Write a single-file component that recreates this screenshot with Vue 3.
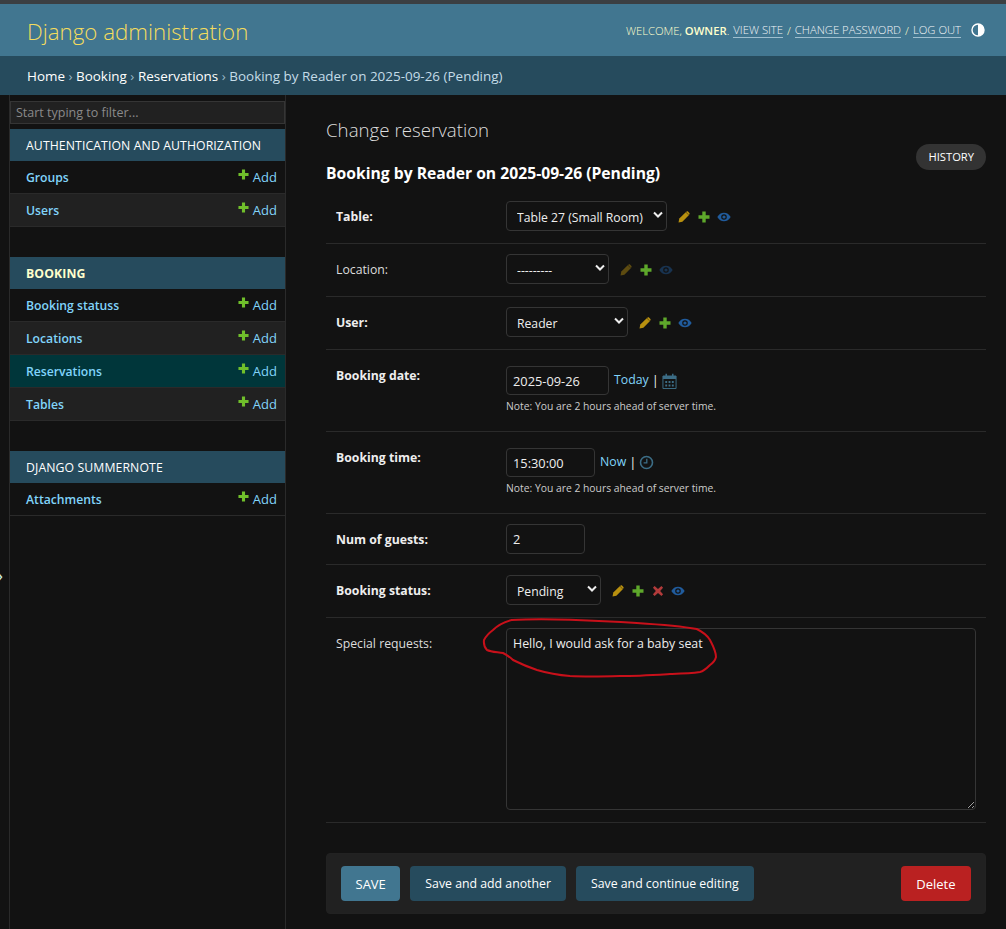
<template>
  <div class="page">
    <svg class="defs" width="0" height="0">
      <symbol id="i-plus" viewBox="0 0 12 12"><path d="M4.3 0.5h3.4v3.8h3.8v3.4h-3.8v3.8h-3.4v-3.8h-3.8v-3.4h3.8z" fill="currentColor" /></symbol>
      <symbol id="i-pencil" viewBox="0 0 12 12">
        <path d="M0.5 11.5l0.8-3.9 6.4-6.4 3.1 3.1-6.4 6.4z" fill="currentColor" />
        <path d="M8.6 0.7c0.5-0.5 1-0.5 1.4-0.1l1.4 1.4c0.4 0.4 0.4 0.9-0.1 1.4l-0.5 0.5-3.1-3.1z" fill="currentColor" />
      </symbol>
      <symbol id="i-cross" viewBox="0 0 12 12"><path d="M2.6 1l3.4 3 3.4-3 1.7 1.7-3 3.3 3 3.3-1.7 1.7-3.4-3-3.4 3-1.7-1.7 3-3.3-3-3.3z" fill="currentColor" /></symbol>
      <symbol id="i-eye" viewBox="0 0 14 10">
        <path fill-rule="evenodd" d="M0.3 5c1.6-2.8 3.9-4.3 6.7-4.3s5.1 1.5 6.7 4.3c-1.6 2.8-3.9 4.3-6.7 4.3s-5.1-1.5-6.7-4.3zM7 2.2a2.8 2.8 0 1 0 0 5.6a2.8 2.8 0 1 0 0-5.6z" fill="currentColor" />
        <circle cx="7" cy="5" r="1.6" fill="currentColor" />
      </symbol>
    </svg>

    <header class="topbar">
      <div class="brand">Django administration</div>
      <div class="usertools">
        <span>Welcome, <strong>owner</strong>.</span>
        <a>View site</a><span class="slash">/</span><a>Change password</a><span class="slash">/</span><a>Log out</a>
        <svg class="theme" width="14" height="14" viewBox="0 0 14 14">
          <circle cx="7" cy="7" r="6" fill="none" stroke="#fff" stroke-width="1.4" />
          <path d="M7 1a6 6 0 0 1 0 12z" fill="#fff" />
        </svg>
      </div>
    </header>

    <nav class="crumbs">
      <a>Home</a> › <a>Booking</a> › <a>Reservations</a> › <span>Booking by Reader on 2025-09-26 (Pending)</span>
    </nav>

    <div class="body">
      <aside class="sidebar">
        <input class="filter" placeholder="Start typing to filter..." />
        <section v-for="mod in modules" :key="mod.name" class="module">
          <h3 class="caption" :class="{ current: mod.current }">{{ mod.name }}</h3>
          <div
            v-for="item in mod.items"
            :key="item"
            class="item"
            :class="{ selected: item === 'Reservations' }"
          >
            <a class="model">{{ item }}</a>
            <a class="add">
              <svg class="add-icon"><use href="#i-plus" /></svg>
              Add
            </a>
          </div>
        </section>
        <span class="toggle">»</span>
      </aside>

      <main class="content">
        <h1 class="title">Change reservation</h1>
        <div class="subhead">
          <h2>Booking by Reader on 2025-09-26 (Pending)</h2>
          <a class="history">History</a>
        </div>

        <form @submit.prevent>
          <div class="row">
            <label class="strong">Table:</label>
            <div class="select" style="width: 161px">
              <select><option>Table 27 (Small Room)</option></select>
              <svg class="chevron" viewBox="0 0 10 7"><path d="M1 1.5l4 4 4-4" /></svg>
            </div>
            <div class="actions-inline">
              <svg class="ico pencil"><use href="#i-pencil" /></svg>
              <svg class="ico plus"><use href="#i-plus" /></svg>
              <svg class="ico eye"><use href="#i-eye" /></svg>
            </div>
          </div>

          <div class="row">
            <label>Location:</label>
            <div class="select" style="width: 103px">
              <select><option>---------</option></select>
              <svg class="chevron" viewBox="0 0 10 7"><path d="M1 1.5l4 4 4-4" /></svg>
            </div>
            <div class="actions-inline">
              <svg class="ico pencil off"><use href="#i-pencil" /></svg>
              <svg class="ico plus"><use href="#i-plus" /></svg>
              <svg class="ico eye off"><use href="#i-eye" /></svg>
            </div>
          </div>

          <div class="row">
            <label class="strong">User:</label>
            <div class="select" style="width: 122px">
              <select><option>Reader</option></select>
              <svg class="chevron" viewBox="0 0 10 7"><path d="M1 1.5l4 4 4-4" /></svg>
            </div>
            <div class="actions-inline">
              <svg class="ico pencil"><use href="#i-pencil" /></svg>
              <svg class="ico plus"><use href="#i-plus" /></svg>
              <svg class="ico eye"><use href="#i-eye" /></svg>
            </div>
          </div>

          <div class="row tall">
            <label class="strong">Booking date:</label>
            <div>
              <div class="datetime">
                <input class="text" style="width: 103px" value="2025-09-26" />
                <a class="shortcut">Today</a><span class="pipe">|</span>
                <svg class="cal" width="15" height="16" viewBox="0 0 16 16" preserveAspectRatio="none">
                  <path d="M1 3h14v12.5H1z" fill="none" stroke="#447e9b" />
                  <path d="M1 3h14v3H1zM3.5 8h2v2h-2zM7 8h2v2H7zM10.5 8h2v2h-2zM3.5 11.5h2v2h-2zM7 11.5h2v2H7zM10.5 11.5h2v2h-2z" fill="#447e9b" />
                  <path d="M4.5 0.8v3M11.5 0.8v3" stroke="#447e9b" stroke-width="1.6" />
                </svg>
              </div>
              <p class="note">Note: You are 2 hours ahead of server time.</p>
            </div>
          </div>

          <div class="row tall">
            <label class="strong">Booking time:</label>
            <div>
              <div class="datetime">
                <input class="text" style="width: 89px" value="15:30:00" />
                <a class="shortcut">Now</a><span class="pipe">|</span>
                <svg class="clock" width="15" height="15" viewBox="0 0 15 15">
                  <circle cx="7.5" cy="7.5" r="6" fill="none" stroke="#447e9b" stroke-width="1.6" />
                  <path d="M7.8 3.8v4H4.6" fill="none" stroke="#447e9b" stroke-width="1.3" />
                </svg>
              </div>
              <p class="note">Note: You are 2 hours ahead of server time.</p>
            </div>
          </div>

          <div class="row short">
            <label class="strong">Num of guests:</label>
            <input class="text guests" style="width: 79px" value="2" />
          </div>

          <div class="row">
            <label class="strong">Booking status:</label>
            <div class="select" style="width: 95px">
              <select><option>Pending</option></select>
              <svg class="chevron" viewBox="0 0 10 7"><path d="M1 1.5l4 4 4-4" /></svg>
            </div>
            <div class="actions-inline">
              <svg class="ico pencil"><use href="#i-pencil" /></svg>
              <svg class="ico plus"><use href="#i-plus" /></svg>
              <svg class="ico cross"><use href="#i-cross" /></svg>
              <svg class="ico eye"><use href="#i-eye" /></svg>
            </div>
          </div>

          <div class="row">
            <label>Special requests:</label>
            <textarea class="requests" :value="requests"></textarea>
          </div>

          <div class="submit-row">
            <button class="btn primary">SAVE</button>
            <button class="btn">Save and add another</button>
            <button class="btn">Save and continue editing</button>
            <a class="btn danger">Delete</a>
          </div>
        </form>

        <!-- red marker scribble on top of the screenshot -->
        <svg class="scribble" width="260" height="70" viewBox="0 0 260 70">
          <path d="M36.7 5C60 3.5 75 4 95 4.7C120 5.5 140 6.5 161.7 8C185 9.5 205 11 221.7 14C228 17 232 20 235 25C238 31 241 36 241 42C240 46 238 48 235 50C232 53 229 56 225 57C215 58.5 205 58.7 195 59C178 60 162 61 145 61C128 61.5 110 61.8 95 61C82 60 72 58 62 55C53 52 46 49 38 45C35 42 32 40 28 38C22 37 16 37 12 35C9 32 8.5 29 9 25C11 21 14 18 18 15C23 10 29 7 36.7 5Z" />
        </svg>
      </main>
    </div>
  </div>
</template>

<script setup>
const requests = 'Hello, I would ask for a baby seat'

const modules = [
  { name: 'Authentication and Authorization', items: ['Groups', 'Users'] },
  { name: 'Booking', current: true, items: ['Booking statuss', 'Locations', 'Reservations', 'Tables'] },
  { name: 'Django Summernote', items: ['Attachments'] }
]
</script>

<style>
html,
body {
  margin: 0;
  background: #121212;
}
</style>

<style scoped>
.page {
  height: 929px;
  overflow: hidden;
  background: #121212;
  color: #eee;
  font-family: "Open Sans", "Noto Sans", sans-serif;
  font-size: 13px;
}

.defs {
  position: absolute;
}

.topbar {
  display: flex;
  align-items: center;
  justify-content: space-between;
  height: 52px;
  padding: 0 21px 0 27px;
  border-top: 4px solid #3b3f42;
  background: #417690;
}

.brand {
  padding-top: 2px;
  color: #f5dd5d;
  font-size: 22.3px;
  font-weight: 300;
}

.usertools {
  display: flex;
  align-items: center;
  color: #ffc;
  font-size: 11.27px;
  font-weight: 300;
  text-transform: uppercase;
  white-space: pre;
}

.usertools strong {
  font-weight: 600;
}

.usertools a {
  margin-left: 4px;
  border-bottom: 1px solid #9fbfcf;
  color: #f0f4f6;
}

.usertools .slash {
  margin-left: 4px;
}

.theme {
  margin-left: 10px;
}

.crumbs {
  height: 39px;
  box-sizing: border-box;
  padding: 10px 27px 0;
  background: #264b5d;
  color: #9ab8c6;
  font-size: 13.45px;
  line-height: 20px;
}

.crumbs a {
  color: #fff;
}

.crumbs span {
  color: #c4dce8;
}

.body {
  display: flex;
  position: relative;
}

.sidebar {
  flex: none;
  width: 275px;
  height: 834px;
  margin-left: 9px;
  padding-top: 6px;
  border-left: 1px solid #2a2a2a;
  border-right: 1px solid #2a2a2a;
}

.filter {
  display: block;
  width: 100%;
  height: 23px;
  box-sizing: border-box;
  margin: 0 0 5px;
  padding: 0 5px;
  border: 1px solid #353535;
  background: #212121;
  color: #ccc;
  font: inherit;
  font-size: 12.5px;
}

.filter::placeholder {
  color: #8a8a8a;
}

.module {
  margin-bottom: 30px;
}

.caption {
  height: 32px;
  box-sizing: border-box;
  margin: 0;
  padding: 0 16px;
  background: #264b5d;
  color: #fff;
  font-size: 12.25px;
  font-weight: 400;
  line-height: 33px;
  letter-spacing: 0.1px;
  text-transform: uppercase;
}

.caption.current {
  color: #ffc;
  font-weight: 700;
}

.item {
  display: flex;
  align-items: center;
  justify-content: space-between;
  height: 33px;
  box-sizing: border-box;
  padding: 0 8px 0 16px;
  border-bottom: 1px solid #2a2a2a;
  background: #121212;
}

.item:nth-child(odd) {
  background: #212121;
}

.item.selected {
  background: #00363a;
}

.model {
  color: #81d4fa;
  font-size: 12.2px;
  font-weight: 600;
}

.add {
  display: flex;
  align-items: center;
  color: #81d4fa;
}

.add-icon {
  width: 11px;
  height: 11px;
  margin: -5px 4px 0 0;
  color: #70bf2b;
}

.toggle {
  position: absolute;
  left: -6px;
  top: 468px;
  color: #cfeee0;
  font-size: 18px;
}

.content {
  flex: 1;
  min-width: 0;
  padding: 0 20px 0 40px;
}

.title {
  margin: 22px 0 0;
  color: #ddd;
  font-size: 18.7px;
  font-weight: 300;
  line-height: 26px;
}

.subhead {
  display: flex;
  justify-content: space-between;
  height: 48px;
}

.subhead h2 {
  margin: 19px 0 0;
  color: #fff;
  font-size: 15.7px;
  font-weight: 700;
  line-height: 22px;
}

.history {
  align-self: flex-start;
  height: 26px;
  margin-top: 1px;
  padding: 0 12px;
  border-radius: 13px;
  background: #333;
  color: #fff;
  font-size: 11.2px;
  line-height: 26px;
  text-transform: uppercase;
}

.row {
  display: flex;
  align-items: flex-start;
  padding: 10px 10px 12px;
  border-bottom: 1px solid #2a2a2a;
}

.row.tall {
  padding: 16px 10px 0;
  height: 65px;
}

.row.short {
  padding-bottom: 10px;
}

label {
  flex: none;
  width: 170px;
  padding-top: 6px;
  color: #ddd;
  font-size: 12.25px;
  line-height: 20px;
}

.tall label {
  padding-top: 1px;
  line-height: 18px;
}

label.strong {
  color: #eee;
  font-weight: 700;
}

.select {
  position: relative;
  flex: none;
  height: 30px;
}

.select select {
  width: 100%;
  height: 100%;
  padding: 2px 0 0 10px;
  border: 1px solid #353535;
  border-radius: 4px;
  appearance: none;
  background: #121212;
  color: #eee;
  font: inherit;
  font-size: 12.2px;
  outline: none;
}

.chevron {
  position: absolute;
  right: 4px;
  top: 10px;
  width: 10px;
  height: 7px;
  fill: none;
  stroke: #eee;
  stroke-width: 2;
  pointer-events: none;
}

.actions-inline {
  display: flex;
  align-items: center;
  height: 30px;
  padding-left: 11px;
  gap: 8px;
}

.ico {
  flex: none;
  width: 12px;
  height: 12px;
  margin-top: 2px;
}

.ico.pencil {
  color: #b8900f;
}

.ico.plus {
  color: #5ea82b;
}

.ico.cross {
  color: #b23b3b;
}

.ico.eye {
  width: 14px;
  margin-left: -1px;
  color: #205b9c;
}

.ico.off {
  opacity: 0.45;
}

.datetime {
  display: flex;
  align-items: center;
  height: 29px;
}

.text {
  height: 29px;
  box-sizing: border-box;
  padding: 0 6px;
  border: 1px solid #353535;
  border-radius: 4px;
  background: #121212;
  color: #eee;
  font: inherit;
  font-size: 12.8px;
  outline: none;
}

.guests {
  height: 30px;
}

.shortcut {
  margin: -2px 0 0 5px;
  color: #81d4fa;
  font-size: 12.3px;
}

.pipe {
  margin: -2px 3px 0 3px;
  color: #eee;
}

.cal,
.clock {
  opacity: 0.85;
}

.note {
  margin: 3px 0 0;
  color: #ccc;
  font-size: 10.35px;
  line-height: 16px;
}

.requests {
  flex: none;
  width: 470px;
  height: 182px;
  box-sizing: border-box;
  padding: 6px 6px;
  border: 1px solid #353535;
  border-radius: 4px;
  background: #121212;
  color: #eee;
  font: inherit;
  font-size: 12.4px;
  outline: none;
}

.submit-row {
  display: flex;
  gap: 10px;
  height: 61px;
  box-sizing: border-box;
  margin-top: 30px;
  padding: 12px 14px;
  border: 1px solid #222;
  border-radius: 4px;
  background: #212121;
}

.btn {
  height: 35px;
  box-sizing: border-box;
  padding: 0 15px;
  border: 0;
  border-radius: 4px;
  background: #264b5d;
  color: #fff;
  font: inherit;
  font-size: 12.3px;
  line-height: 36px;
}

.btn.primary {
  padding: 0 14.5px;
  background: #417690;
  font-size: 13px;
}

.btn.danger {
  margin-left: auto;
  padding: 0 15.5px;
  background: #ba2121;
  font-size: 13px;
}

.scribble {
  position: absolute;
  left: 475px;
  top: 520px;
  fill: none;
  stroke: #c8101a;
  stroke-width: 2;
  pointer-events: none;
}
</style>
